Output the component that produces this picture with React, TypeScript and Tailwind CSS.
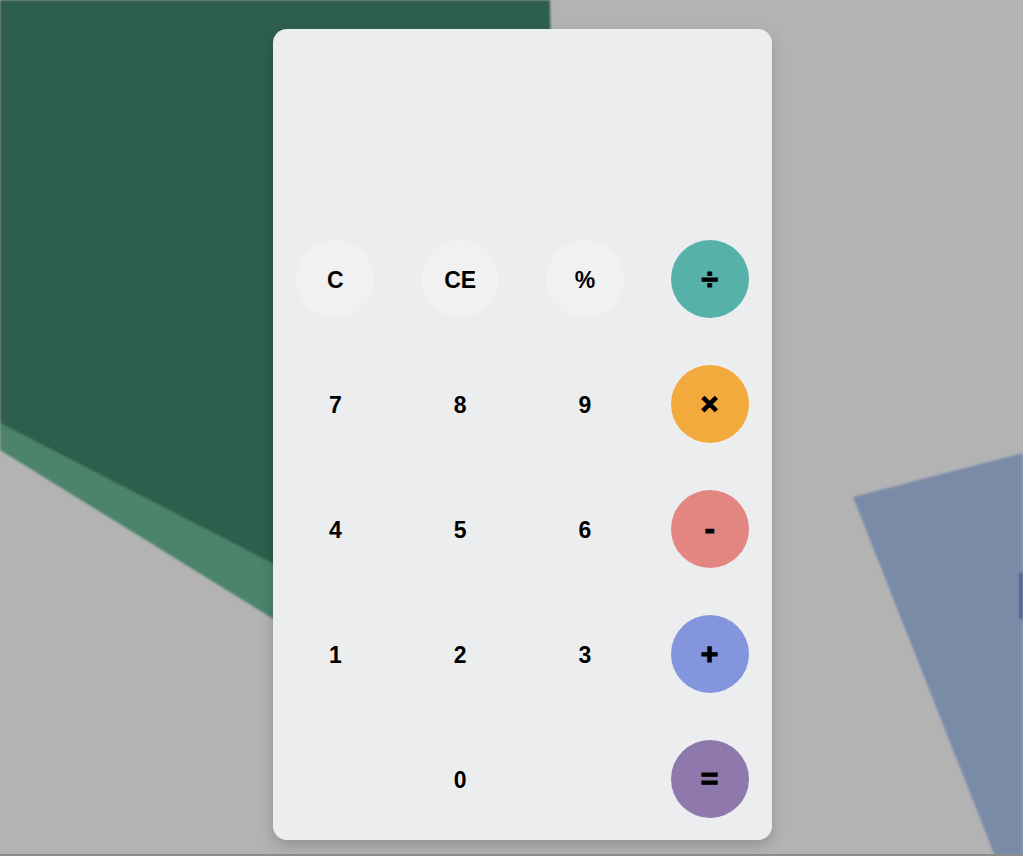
const keys: { label: string; tone: "fn" | "num" | "op"; bg?: string }[] = [
  { label: "C", tone: "fn" },
  { label: "CE", tone: "fn" },
  { label: "%", tone: "fn" },
  { label: "÷", tone: "op", bg: "bg-[#56b1a8]" },
  { label: "7", tone: "num" },
  { label: "8", tone: "num" },
  { label: "9", tone: "num" },
  { label: "×", tone: "op", bg: "bg-[#f2aa3c]" },
  { label: "4", tone: "num" },
  { label: "5", tone: "num" },
  { label: "6", tone: "num" },
  { label: "-", tone: "op", bg: "bg-[#e38581]" },
  { label: "1", tone: "num" },
  { label: "2", tone: "num" },
  { label: "3", tone: "num" },
  { label: "+", tone: "op", bg: "bg-[#8395dc]" },
  { label: "", tone: "num" },
  { label: "0", tone: "num" },
  { label: "", tone: "num" },
  { label: "=", tone: "op", bg: "bg-[#8f78ac]" },
];

function Backdrop() {
  return (
    <svg className="absolute inset-0 w-full h-full" viewBox="0 0 1023 856" preserveAspectRatio="none">
      <defs>
        <filter id="soft">
          <feGaussianBlur stdDeviation="0.8" />
        </filter>
      </defs>
      <g filter="url(#soft)">
        <polygon points="0,0 550,0 560,780 272,618 0,450" fill="#4b836c" />
        <polygon points="0,0 550,0 556,720 272,563 0,423" fill="#2f5f4d" />
        <polygon points="853,497 1023,453 1023,856 995,856" fill="#7a8ba8" />
        <polygon points="1019,573 1023,572 1023,620 1019,618" fill="#4a6396" />
      </g>
    </svg>
  );
}

function Key({ k }: { k: (typeof keys)[number] }) {
  const base = "w-[78px] h-[78px] rounded-full flex items-center justify-center font-bold text-black";
  const tone =
    k.tone === "op"
      ? `${k.bg} text-[30px] [-webkit-text-stroke:1.2px_black]`
      : k.tone === "fn"
        ? "bg-[#f1f1f1] text-[23px] pt-[4px]"
        : "bg-transparent text-[23px] pt-[4px]";
  return (
    <div className="h-[125px] flex items-center justify-center">
      {k.label && <button className={`${base} ${tone}`}>{k.label}</button>}
    </div>
  );
}

export default function App() {
  return (
    <div className="relative w-[1023px] h-[856px] overflow-hidden bg-[#b3b3b3] font-['Liberation_Sans',Arial,sans-serif]">
      <Backdrop />
      <div className="absolute left-0 right-0 bottom-0 h-[2px] bg-[#8c8c8c]" />
      <div className="relative pt-[29px] pl-[273px]">
        <div className="w-[499px] rounded-[14px] bg-[#ecedef] shadow-[0_6px_14px_rgba(0,0,0,0.18)] overflow-hidden">
          <div className="h-[187px]" />
          <div className="grid grid-cols-4 -mb-[1px]">
            {keys.map((k, i) => (
              <Key key={i} k={k} />
            ))}
          </div>
        </div>
      </div>
    </div>
  );
}
